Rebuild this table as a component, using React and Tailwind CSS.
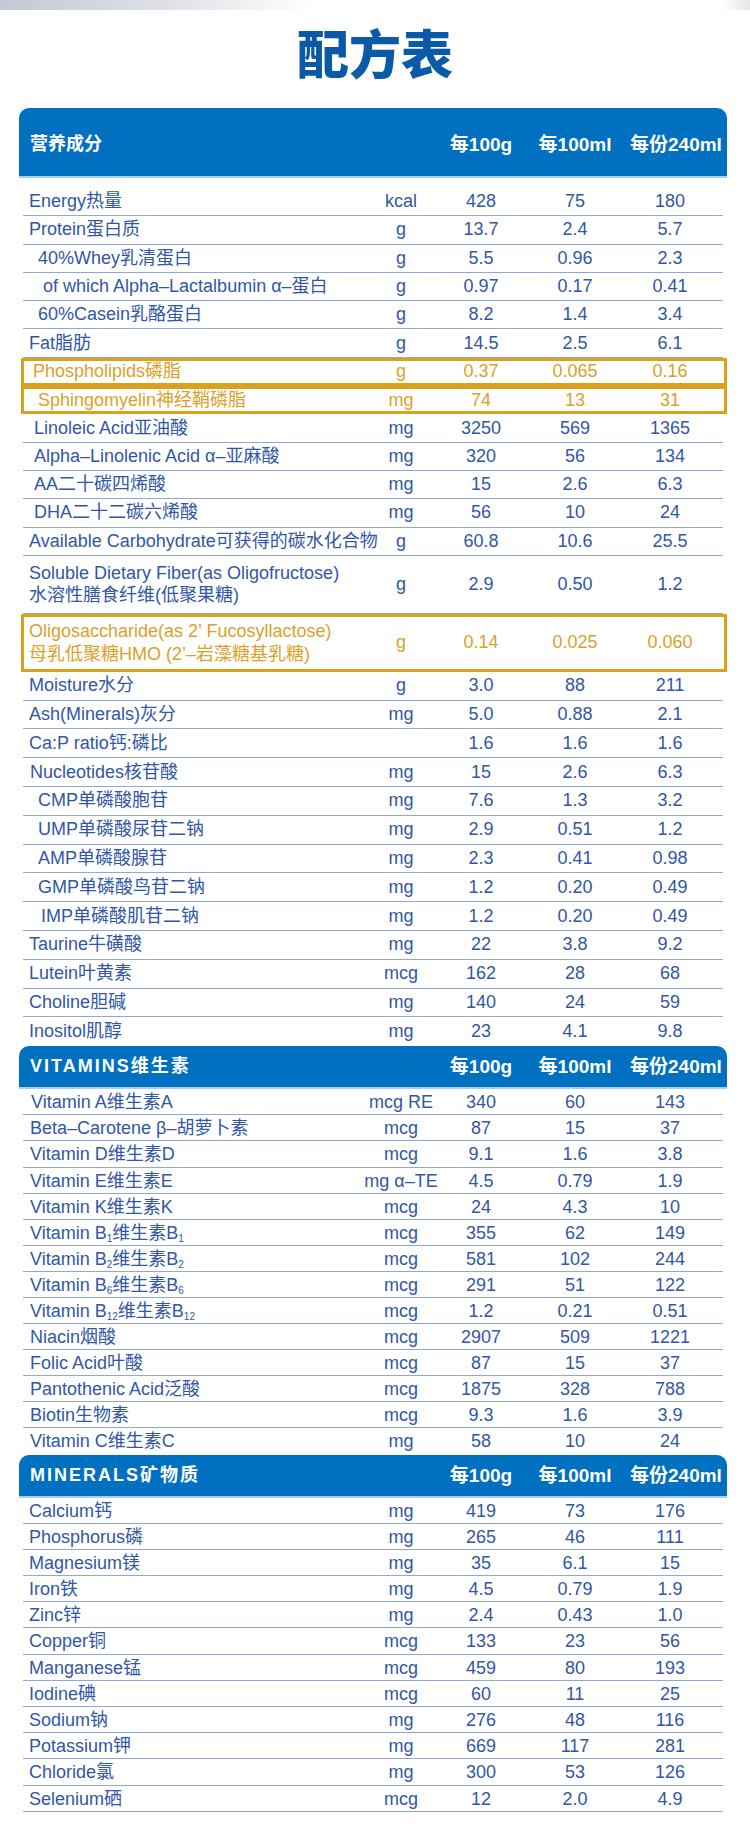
import React from 'react';

// row heights per block, measured off the reference
const H1 = 'h-[28.3px]';
const H2 = 'h-[58px]';
const H3 = 'h-[28.8px]';
const HV = 'h-[26.1px]';
const HM = 'h-[26.2px]';

const B = ({ n }) => <sub className="text-[10px] align-baseline relative top-[3px]">{n}</sub>;

const nutrients = [
  { l: 'Energy热量', u: 'kcal', v: ['428', '75', '180'], h: H1, p: 'pl-[6px]' },
  { l: 'Protein蛋白质', u: 'g', v: ['13.7', '2.4', '5.7'], h: H1, p: 'pl-[6px]' },
  { l: '40%Whey乳清蛋白', u: 'g', v: ['5.5', '0.96', '2.3'], h: H1, p: 'pl-[15px]' },
  { l: 'of which Alpha–Lactalbumin α–蛋白', u: 'g', v: ['0.97', '0.17', '0.41'], h: H1, p: 'pl-[20px]' },
  { l: '60%Casein乳酪蛋白', u: 'g', v: ['8.2', '1.4', '3.4'], h: H1, p: 'pl-[15px]' },
  { l: 'Fat脂肪', u: 'g', v: ['14.5', '2.5', '6.1'], h: H1, p: 'pl-[6px]' },
  { l: 'Phospholipids磷脂', u: 'g', v: ['0.37', '0.065', '0.16'], h: H1, p: 'pl-[10px]', gold: true },
  { l: 'Sphingomyelin神经鞘磷脂', u: 'mg', v: ['74', '13', '31'], h: H1, p: 'pl-[15px]', gold: true },
  { l: 'Linoleic Acid亚油酸', u: 'mg', v: ['3250', '569', '1365'], h: H1, p: 'pl-[11px]' },
  { l: 'Alpha–Linolenic Acid α–亚麻酸', u: 'mg', v: ['320', '56', '134'], h: H1, p: 'pl-[11px]' },
  { l: 'AA二十碳四烯酸', u: 'mg', v: ['15', '2.6', '6.3'], h: H1, p: 'pl-[11px]' },
  { l: 'DHA二十二碳六烯酸', u: 'mg', v: ['56', '10', '24'], h: H1, p: 'pl-[11px]' },
  { l: 'Available Carbohydrate可获得的碳水化合物', u: 'g', v: ['60.8', '10.6', '25.5'], h: H1, p: 'pl-[6px]' },
  {
    l: (
      <span className="block leading-[22px]">
        Soluble Dietary Fiber(as Oligofructose)<br />水溶性膳食纤维(低聚果糖)
      </span>
    ),
    u: 'g', v: ['2.9', '0.50', '1.2'], h: H2, p: 'pl-[6px]',
  },
  {
    l: (
      <span className="block leading-[23px]">
        Oligosaccharide(as 2’ Fucosyllactose)<br />母乳低聚糖HMO (2’–岩藻糖基乳糖)
      </span>
    ),
    u: 'g', v: ['0.14', '0.025', '0.060'], h: H2, p: 'pl-[6px]', gold: true,
  },
  { l: 'Moisture水分', u: 'g', v: ['3.0', '88', '211'], h: H3, p: 'pl-[6px]' },
  { l: 'Ash(Minerals)灰分', u: 'mg', v: ['5.0', '0.88', '2.1'], h: H3, p: 'pl-[6px]' },
  { l: 'Ca:P ratio钙:磷比', u: '', v: ['1.6', '1.6', '1.6'], h: H3, p: 'pl-[6px]' },
  { l: 'Nucleotides核苷酸', u: 'mg', v: ['15', '2.6', '6.3'], h: H3, p: 'pl-[7px]' },
  { l: 'CMP单磷酸胞苷', u: 'mg', v: ['7.6', '1.3', '3.2'], h: H3, p: 'pl-[15px]' },
  { l: 'UMP单磷酸尿苷二钠', u: 'mg', v: ['2.9', '0.51', '1.2'], h: H3, p: 'pl-[15px]' },
  { l: 'AMP单磷酸腺苷', u: 'mg', v: ['2.3', '0.41', '0.98'], h: H3, p: 'pl-[15px]' },
  { l: 'GMP单磷酸鸟苷二钠', u: 'mg', v: ['1.2', '0.20', '0.49'], h: H3, p: 'pl-[15px]' },
  { l: 'IMP单磷酸肌苷二钠', u: 'mg', v: ['1.2', '0.20', '0.49'], h: H3, p: 'pl-[18px]' },
  { l: 'Taurine牛磺酸', u: 'mg', v: ['22', '3.8', '9.2'], h: H3, p: 'pl-[6px]' },
  { l: 'Lutein叶黄素', u: 'mcg', v: ['162', '28', '68'], h: H3, p: 'pl-[6px]' },
  { l: 'Choline胆碱', u: 'mg', v: ['140', '24', '59'], h: H3, p: 'pl-[6px]' },
  { l: 'Inositol肌醇', u: 'mg', v: ['23', '4.1', '9.8'], h: H3, p: 'pl-[6px]', last: true },
];

const vitamins = [
  { l: 'Vitamin A维生素A', u: 'mcg RE', v: ['340', '60', '143'], p: 'pl-[8px]' },
  { l: 'Beta–Carotene β–胡萝卜素', u: 'mcg', v: ['87', '15', '37'] },
  { l: 'Vitamin D维生素D', u: 'mcg', v: ['9.1', '1.6', '3.8'] },
  { l: 'Vitamin E维生素E', u: 'mg α–TE', v: ['4.5', '0.79', '1.9'] },
  { l: 'Vitamin K维生素K', u: 'mcg', v: ['24', '4.3', '10'] },
  { l: <>Vitamin B<B n="1" />维生素B<B n="1" /></>, u: 'mcg', v: ['355', '62', '149'] },
  { l: <>Vitamin B<B n="2" />维生素B<B n="2" /></>, u: 'mcg', v: ['581', '102', '244'] },
  { l: <>Vitamin B<B n="6" />维生素B<B n="6" /></>, u: 'mcg', v: ['291', '51', '122'] },
  { l: <>Vitamin B<B n="12" />维生素B<B n="12" /></>, u: 'mcg', v: ['1.2', '0.21', '0.51'] },
  { l: 'Niacin烟酸', u: 'mcg', v: ['2907', '509', '1221'] },
  { l: 'Folic Acid叶酸', u: 'mcg', v: ['87', '15', '37'] },
  { l: 'Pantothenic Acid泛酸', u: 'mcg', v: ['1875', '328', '788'] },
  { l: 'Biotin生物素', u: 'mcg', v: ['9.3', '1.6', '3.9'] },
  { l: 'Vitamin C维生素C', u: 'mg', v: ['58', '10', '24'], last: true },
];

const minerals = [
  { l: 'Calcium钙', u: 'mg', v: ['419', '73', '176'] },
  { l: 'Phosphorus磷', u: 'mg', v: ['265', '46', '111'] },
  { l: 'Magnesium镁', u: 'mg', v: ['35', '6.1', '15'] },
  { l: 'Iron铁', u: 'mg', v: ['4.5', '0.79', '1.9'] },
  { l: 'Zinc锌', u: 'mg', v: ['2.4', '0.43', '1.0'] },
  { l: 'Copper铜', u: 'mcg', v: ['133', '23', '56'] },
  { l: 'Manganese锰', u: 'mcg', v: ['459', '80', '193'] },
  { l: 'Iodine碘', u: 'mcg', v: ['60', '11', '25'] },
  { l: 'Sodium钠', u: 'mg', v: ['276', '48', '116'] },
  { l: 'Potassium钾', u: 'mg', v: ['669', '117', '281'] },
  { l: 'Chloride氯', u: 'mg', v: ['300', '53', '126'] },
  { l: 'Selenium硒', u: 'mcg', v: ['12', '2.0', '4.9'] },
];

const grid = 'grid grid-cols-[337px_82px_78px_110px_80px_1fr] items-center';

const Row = ({ item, h }) => {
  const color = item.gold ? 'text-[#dc9f2a]' : 'text-[#3157a6]';
  return (
    <div className={`${grid} ${h || item.h} ${color} relative ${item.last || item.gold ? '' : 'border-b border-[#8ea7dc]'}`}>
      {item.gold && (
        <span className="absolute inset-y-0 -left-[2px] -right-[4px] border-[3px] border-[#d9a11c] pointer-events-none" />
      )}
      <div className={`${item.p || 'pl-[7px]'} whitespace-nowrap`}>{item.l}</div>
      <div className="text-center whitespace-nowrap">{item.u}</div>
      {item.v.map((x, i) => (
        <div key={i} className="text-center">{x}</div>
      ))}
      <div />
    </div>
  );
};

const Bar = ({ title, cols, tall, wide }) => (
  <div
    className={`bg-[#0070c0] text-white font-bold rounded-t-[10px] border-b-2 border-[#a9cdeb] px-[4px] ${
      tall ? 'pt-[26px] pb-[21px]' : 'py-[10px]'
    }`}
  >
    <div className={`${grid} leading-[21px]`}>
      <div className={`pl-[7px] text-[18px] whitespace-nowrap ${wide ? 'tracking-[2px]' : ''}`}>{title}</div>
      <div />
      {cols ? (
        <>
          <div className="text-center text-[19px] whitespace-nowrap">每100g</div>
          <div className="text-center text-[19px] whitespace-nowrap">每100ml</div>
          <div className="text-center text-[19px] whitespace-nowrap">每份240ml</div>
        </>
      ) : (
        <>
          <div />
          <div />
          <div />
        </>
      )}
      <div />
    </div>
  </div>
);

export default function App() {
  return (
    <div
      className="w-[750px] h-[1835px] bg-white text-[18px] overflow-hidden"
      style={{ fontFamily: '"Liberation Sans", "Noto Sans CJK SC", sans-serif' }}
    >
      <div className="h-[10px] bg-[linear-gradient(90deg,#c3c9d2_0%,#dde1e7_22%,#ffffff_42%,#ffffff_96%,#e3e6ea_100%)]" />

      <h1
        className="mt-[16px] text-center text-[52px] leading-[52px] font-black text-[#0b5aa8]"
        style={{ fontFamily: '"Noto Sans CJK SC", sans-serif' }}
      >
        配方表
      </h1>

      <div className="ml-[19px] w-[708px] mt-[30px]">
        <Bar title="营养成分" cols tall />
        <div className="px-[4px] pt-[10px]">
          {nutrients.map((n, i) => (
            <Row key={i} item={n} />
          ))}
        </div>

        <Bar title="VITAMINS维生素" cols wide />
        <div className="px-[4px]">
          {vitamins.map((n, i) => (
            <Row key={i} item={n} h={HV} />
          ))}
        </div>

        <Bar title="MINERALS矿物质" cols wide />
        <div className="px-[4px]">
          {minerals.map((n, i) => (
            <Row key={i} item={{ ...n, p: 'pl-[6px]' }} h={HM} />
          ))}
        </div>
      </div>
    </div>
  );
}
